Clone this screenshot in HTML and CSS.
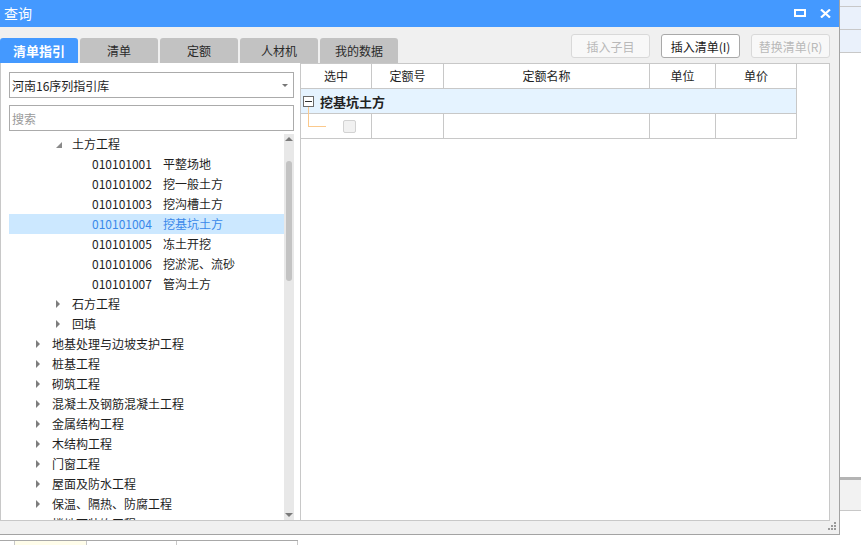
FILE: index.html
```html
<!DOCTYPE html>
<html lang="zh-CN">
<head>
<meta charset="utf-8">
<title>查询</title>
<link rel="stylesheet" href="styles.css">
</head>
<body>
<div class="desktop">
  <div class="window">
    <div class="titlebar">
      <span class="title">查询</span>
      <span class="tb-btn">
        <svg width="12" height="8" viewBox="0 0 12 8"><rect x="1" y="1" width="10" height="6" fill="none" stroke="#fff" stroke-width="2"/></svg>
      </span>
      <span class="tb-btn">
        <svg width="11" height="9" viewBox="0 0 11 9"><path d="M1 0.5 L10 8.5 M10 0.5 L1 8.5" stroke="#fff" stroke-width="2.2"/></svg>
      </span>
    </div>

    <div class="toolbar">
      <div class="tabs">
        <div class="tab active">清单指引</div>
        <div class="tab">清单</div>
        <div class="tab">定额</div>
        <div class="tab">人材机</div>
        <div class="tab">我的数据</div>
      </div>
      <div class="actions">
        <button class="btn disabled">插入子目</button>
        <button class="btn">插入清单(I)</button>
        <button class="btn disabled">替换清单(R)</button>
      </div>
    </div>

    <div class="content">
      <div class="left">
        <div class="select">
          <span>河南16序列指引库</span>
          <span class="caret"></span>
        </div>
        <div class="search">搜索</div>
        <div class="tree-wrap">
          <div class="tree">
            <div class="row l2"><span class="arrow open"></span><span>土方工程</span></div>
            <div class="row l3"><span class="code">010101001</span><span>平整场地</span></div>
            <div class="row l3"><span class="code">010101002</span><span>挖一般土方</span></div>
            <div class="row l3"><span class="code">010101003</span><span>挖沟槽土方</span></div>
            <div class="row l3 selected"><span class="code">010101004</span><span>挖基坑土方</span></div>
            <div class="row l3"><span class="code">010101005</span><span>冻土开挖</span></div>
            <div class="row l3"><span class="code">010101006</span><span>挖淤泥、流砂</span></div>
            <div class="row l3"><span class="code">010101007</span><span>管沟土方</span></div>
            <div class="row l2"><span class="arrow"></span><span>石方工程</span></div>
            <div class="row l2"><span class="arrow"></span><span>回填</span></div>
            <div class="row l1"><span class="arrow"></span><span>地基处理与边坡支护工程</span></div>
            <div class="row l1"><span class="arrow"></span><span>桩基工程</span></div>
            <div class="row l1"><span class="arrow"></span><span>砌筑工程</span></div>
            <div class="row l1"><span class="arrow"></span><span>混凝土及钢筋混凝土工程</span></div>
            <div class="row l1"><span class="arrow"></span><span>金属结构工程</span></div>
            <div class="row l1"><span class="arrow"></span><span>木结构工程</span></div>
            <div class="row l1"><span class="arrow"></span><span>门窗工程</span></div>
            <div class="row l1"><span class="arrow"></span><span>屋面及防水工程</span></div>
            <div class="row l1"><span class="arrow"></span><span>保温、隔热、防腐工程</span></div>
            <div class="row l1"><span class="arrow"></span><span>楼地面装饰工程</span></div>
          </div>
          <div class="scrollbar">
            <span class="sb-up"></span>
            <span class="sb-thumb"></span>
            <span class="sb-space"></span>
            <span class="sb-down"></span>
          </div>
        </div>
      </div>

      <div class="right">
        <div class="grid">
          <div class="hcell">选中</div>
          <div class="hcell">定额号</div>
          <div class="hcell">定额名称</div>
          <div class="hcell">单位</div>
          <div class="hcell">单价</div>
          <div class="group">
            <span class="minus"></span>
            <span class="group-name">挖基坑土方</span>
          </div>
          <div class="dcell"><span class="check"></span></div>
          <div class="dcell"></div>
          <div class="dcell"></div>
          <div class="dcell"></div>
          <div class="dcell"></div>
        </div>
      </div>
    </div>

    <div class="footer">
      <svg width="9" height="9" viewBox="0 0 9 9" fill="#9a9a9a">
        <rect x="6" y="0" width="2" height="2"/>
        <rect x="3" y="3" width="2" height="2"/><rect x="6" y="3" width="2" height="2"/>
        <rect x="0" y="6" width="2" height="2"/><rect x="3" y="6" width="2" height="2"/><rect x="6" y="6" width="2" height="2"/>
      </svg>
    </div>
  </div>

  <div class="side">
    <div class="s-cell top"></div>
    <div class="s-cell"></div>
    <div class="s-cell"></div>
    <div class="s-fill"></div>
    <div class="s-bar"></div>
    <div class="s-box"></div>
    <div class="s-rest"></div>
  </div>

  <div class="bottom">
    <div class="b-line"></div>
    <div class="b-cells">
      <div class="b-cell w1"></div>
      <div class="b-cell w2 yellow"></div>
      <div class="b-cell w3"></div>
      <div class="b-cell w4"></div>
    </div>
  </div>
  <div class="corner"></div>
</div>
</body>
</html>
```

FILE: styles.css
```css
* { box-sizing: border-box; }
html, body { margin: 0; padding: 0; }
body {
  width: 861px;
  height: 545px;
  overflow: hidden;
  background: #fff;
  font-family: "Noto Sans CJK SC", "Microsoft YaHei", sans-serif;
  font-size: 12px;
  color: #1e1e1e;
}
.desktop {
  display: grid;
  grid-template-columns: 840px 21px;
  grid-template-rows: 535px 10px;
  width: 861px;
  height: 545px;
}

/* window */
.window {
  grid-column: 1;
  grid-row: 1;
  display: flex;
  flex-direction: column;
  background: #f0f0f0;
  border-right: 1px solid #a3a3a3;
  border-bottom: 1px solid #a3a3a3;
}
.titlebar {
  height: 27px;
  flex: none;
  background: #4499ff;
  color: #fff;
  display: flex;
  align-items: center;
  padding: 0 8px 0 4px;
  font-size: 14px;
}
.title { flex: 1; line-height: 27px; }
.tb-btn { display: flex; align-items: center; margin-left: 14px; margin-top: -1px; }

.toolbar {
  height: 36px;
  flex: none;
  display: flex;
  justify-content: space-between;
  margin-right: 9px;
}
.tabs { display: flex; gap: 2px; align-self: flex-end; }
.tab {
  width: 78px;
  height: 25px;
  background: #c2c2c2;
  border-radius: 3px 3px 0 0;
  text-align: center;
  line-height: 25px;
  font-size: 12px;
  color: #2a2a2a;
}
.tab.active {
  background: #4499ff;
  color: #fff;
  font-weight: bold;
  font-size: 13px;
}
.actions { display: flex; gap: 11px; padding-top: 7px; }
.btn {
  width: 79px;
  height: 24px;
  border: 1px solid #a9a9a9;
  border-radius: 3px;
  background: #fff;
  font-family: inherit;
  font-size: 12px;
  color: #1a1a1a;
  padding: 0;
}
.btn.disabled { border-color: #d9d9d9; color: #b9b9b9; background: #f8f8f8; }

.content {
  height: 458px;
  flex: none;
  display: flex;
  margin-right: 9px;
}
.left {
  width: 301px;
  flex: none;
  background: #fff;
  border-left: 1px solid #c8c8c8;
  border-right: 1px solid #c8c8c8;
  border-bottom: 1px solid #c8c8c8;
  padding: 9px 0 0 8px;
  display: flex;
  flex-direction: column;
}
.select, .search {
  width: 285px;
  height: 26px;
  border: 1px solid #ababab;
  display: flex;
  align-items: center;
  padding-left: 2px;
  flex: none;
}
.select { justify-content: space-between; padding-right: 5px; color: #1e1e1e; }
.caret {
  width: 0; height: 0;
  border-left: 3px solid transparent;
  border-right: 3px solid transparent;
  border-top: 3px solid #777;
}
.search { margin-top: 7px; color: #9a9a9a; }

.tree-wrap {
  flex: 1;
  display: flex;
  margin-top: 3px;
  overflow: hidden;
}
.tree { width: 275px; flex: none; }
.row {
  height: 20px;
  line-height: 20px;
  display: flex;
  align-items: center;
  white-space: nowrap;
  color: #1e1e1e;
}
.row.l1 { padding-left: 27px; }
.row.l2 { padding-left: 47px; }
.row.l3 { padding-left: 83px; }
.row.selected { background: #cce8ff; color: #3a88ea; }
.arrow {
  width: 16px;
  height: 20px;
  flex: none;
  position: relative;
}
.arrow::before {
  content: "";
  position: absolute;
  left: 0;
  top: 6px;
  border-top: 4px solid transparent;
  border-bottom: 4px solid transparent;
  border-left: 4px solid #7d7d7d;
}
.arrow.open::before {
  left: 0;
  top: 8px;
  border: none;
  width: 0; height: 0;
  border-left: 6px solid transparent;
  border-bottom: 6px solid #8a8a8a;
}
.code { width: 71px; flex: none; }

.scrollbar {
  width: 10px;
  flex: none;
  background: #e8e8e8;
  display: flex;
  flex-direction: column;
  align-items: center;
}
.sb-up {
  margin-top: 3px;
  width: 0; height: 0;
  border-left: 4px solid transparent;
  border-right: 4px solid transparent;
  border-bottom: 4px solid #7a7a7a;
}
.sb-thumb {
  margin-top: 20px;
  width: 6px;
  height: 120px;
  border-radius: 3px;
  background: #c3c3c3;
}
.sb-space { flex: 1; }
.sb-down {
  margin-bottom: 3px;
  width: 0; height: 0;
  border-left: 4px solid transparent;
  border-right: 4px solid transparent;
  border-top: 4px solid #7a7a7a;
}

.right {
  flex: 1;
  background: #fff;
  border-top: 1px solid #c8c8c8;
  border-right: 1px solid #c8c8c8;
  border-bottom: 1px solid #c8c8c8;
}
.grid {
  display: grid;
  grid-template-columns: 71px 72px 206px 66px 81px;
  grid-auto-rows: 25px;
  width: 496px;
}
.hcell, .dcell {
  border-right: 1px solid #c8c8c8;
  border-bottom: 1px solid #c8c8c8;
}
.hcell {
  text-align: center;
  line-height: 24px;
  color: #1e1e1e;
}
.group {
  grid-column: 1 / 6;
  background: #e5f3ff;
  border-right: 1px solid #c8c8c8;
  border-bottom: 1px solid #c8c8c8;
  display: flex;
  align-items: center;
  padding-left: 2px;
}
.minus {
  width: 11px;
  height: 11px;
  border: 1px solid #6a6a6a;
  background: #fff;
  position: relative;
  margin-top: 1px;
}
.minus::before {
  content: "";
  position: absolute;
  left: 1px; top: 4px;
  width: 7px; height: 1px;
  background: #333;
}
.minus::after {
  content: "";
  position: absolute;
  left: 4px;
  top: 10px;
  width: 17px;
  height: 19px;
  border-left: 1px solid #fbc98c;
  border-bottom: 1px solid #fbc98c;
}
.group-name {
  margin-left: 6px;
  font-weight: bold;
  font-size: 13px;
  color: #222;
}
.dcell { display: flex; align-items: center; }
.check {
  margin-left: 42px;
  width: 13px;
  height: 13px;
  border: 1px solid #d2d2d2;
  border-radius: 2px;
  background: #f1f1f1;
}

.footer {
  flex: 1;
  display: flex;
  justify-content: flex-end;
  align-items: flex-start;
  padding: 1px 2px 0 0;
}

/* background application */
.side {
  grid-column: 2;
  grid-row: 1;
  display: flex;
  flex-direction: column;
  background: #fff;
}
.s-cell { height: 23px; background: #eaf1fb; border-bottom: 1px solid #c8c8c8; }
.s-cell.top { height: 7px; }
.s-fill { height: 424px; }
.s-bar { height: 3px; background: #b4b4b4; }
.s-box { height: 31px; background: #f2f2f2; border-bottom: 1px solid #c8c8c8; }
.s-rest { flex: 1; }

.bottom {
  grid-column: 1;
  grid-row: 2;
  display: flex;
  flex-direction: column;
  background: #fff;
}
.b-line { height: 6px; width: 298px; border-bottom: 1px solid #a8a8a8; }
.b-cells { display: flex; flex: 1; }
.b-cell { border-right: 1px solid #c8c8c8; }
.b-cell.w1 { width: 15px; }
.b-cell.w2 { width: 72px; }
.b-cell.w3 { width: 90px; }
.b-cell.w4 { width: 121px; }
.b-cell.yellow { background: #fffdea; }
.corner { grid-column: 2; grid-row: 2; background: #fff; }
```
